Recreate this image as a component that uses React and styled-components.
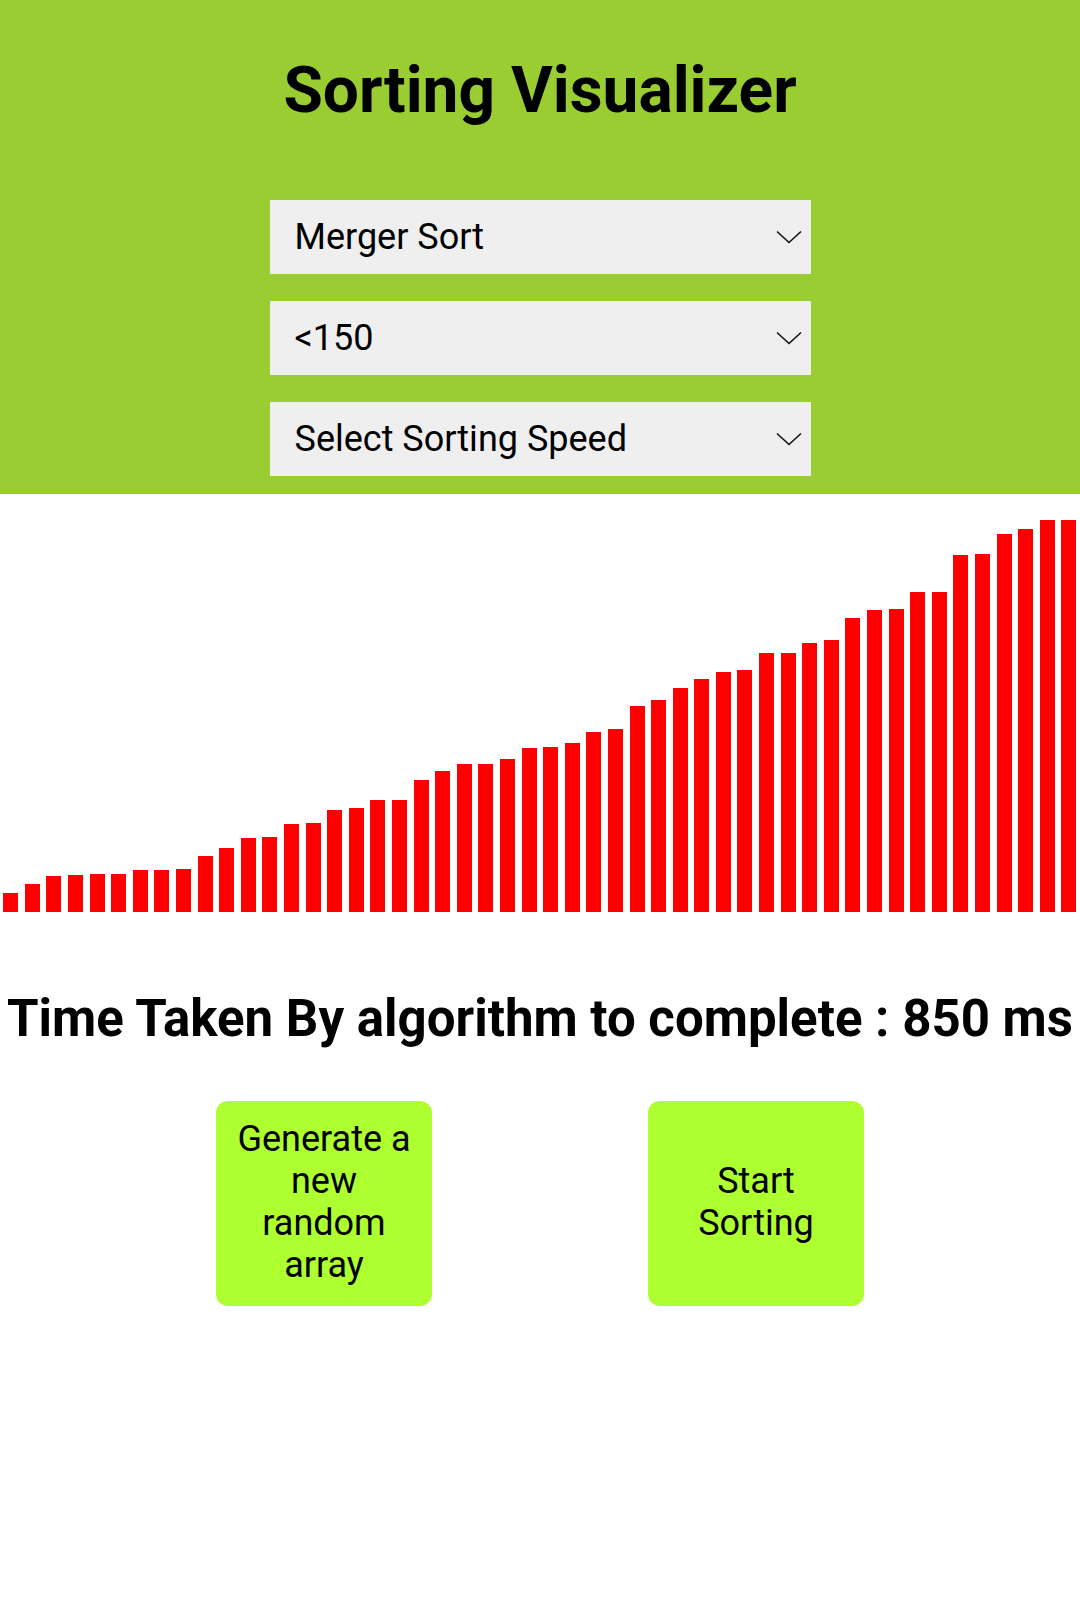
import React from "react";
import styled, { createGlobalStyle } from "styled-components";

const GlobalStyle = createGlobalStyle`
  html, body { margin: 0; padding: 0; background: #ffffff; }
  body { font-family: Roboto, "Liberation Sans", Arial, sans-serif; color: #000; }
  * { box-sizing: border-box; }
`;

const Page = styled.div`
  display: flex;
  flex-direction: column;
  min-height: 1624px;
`;

const Header = styled.header`
  background: #9acd32;
  display: flex;
  flex-direction: column;
  align-items: center;
  padding: 54px 0 18px;
`;

const Title = styled.h1`
  margin: 0 0 72px;
  font-family: Roboto, "Liberation Sans", sans-serif;
  font-size: 64px;
  font-weight: 700;
  line-height: 74px;
  color: #000;
`;

const Controls = styled.div`
  display: flex;
  flex-direction: column;
  gap: 27px;
  width: 541px;
`;

const SelectWrap = styled.div`
  position: relative;
  height: 74px;
`;

const Select = styled.select`
  appearance: none;
  -webkit-appearance: none;
  width: 100%;
  height: 100%;
  border: 0;
  border-radius: 0;
  background: #efefef;
  padding: 0 50px 0 25px;
  font-family: Roboto, "Liberation Sans", sans-serif;
  font-size: 36px;
  font-weight: 400;
  color: #000;
  outline: none;
`;

const Chevron = styled.svg`
  position: absolute;
  right: 9px;
  top: 50%;
  transform: translateY(-50%);
  pointer-events: none;
`;

const Chart = styled.div`
  display: flex;
  align-items: flex-end;
  height: 418px;
`;

const Bar = styled.div`
  flex: 1;
  margin: 0 3.3px;
  background: #ff0000;
`;

const TimeText = styled.h2`
  margin: 77px 0 0;
  text-align: center;
  font-family: Roboto, "Liberation Sans", sans-serif;
  font-size: 51px;
  font-weight: 700;
  line-height: 60px;
  white-space: nowrap;
`;

const Actions = styled.div`
  display: flex;
  justify-content: center;
  gap: 216px;
  margin-top: 52px;
`;

const ActionButton = styled.button`
  width: 216px;
  height: 205px;
  background: #adff2f;
  border: 0;
  border-radius: 12px;
  padding: 0 12px 4px;
  font-family: Roboto, "Liberation Sans", sans-serif;
  font-size: 36px;
  font-weight: 400;
  color: #000;
  cursor: pointer;
`;

const heights = [
  19, 28, 36, 37, 38, 38, 42, 42, 43, 56, 64, 74, 75, 88, 89, 102, 104, 112,
  112, 132, 141, 148, 148, 153, 164, 165, 169, 180, 183, 206, 212, 224, 233,
  240, 242, 259, 259, 269, 272, 294, 302, 303, 320, 320, 357, 358, 378, 383,
  392, 392,
];

function Dropdown({ value, options }) {
  return (
    <SelectWrap>
      <Select defaultValue={value}>
        {options.map((o) => (
          <option key={o} value={o}>
            {o}
          </option>
        ))}
      </Select>
      <Chevron width="26" height="14" viewBox="0 0 26 14" fill="none">
        <path d="M1 1.5 L13 12.5 L25 1.5" stroke="#111" strokeWidth="1.6" />
      </Chevron>
    </SelectWrap>
  );
}

export default function App() {
  return (
    <Page>
      <GlobalStyle />
      <Header>
        <Title>Sorting Visualizer</Title>
        <Controls>
          <Dropdown
            value="Merger Sort"
            options={["Merger Sort", "Bubble Sort", "Quick Sort", "Insertion Sort", "Selection Sort"]}
          />
          <Dropdown value="<150" options={["<50", "<100", "<150", "<200"]} />
          <Dropdown
            value="Select Sorting Speed"
            options={["Select Sorting Speed", "Slow", "Medium", "Fast"]}
          />
        </Controls>
      </Header>
      <Chart>
        {heights.map((h, i) => (
          <Bar key={i} style={{ height: `${h}px` }} />
        ))}
      </Chart>
      <TimeText>Time Taken By algorithm to complete : 850 ms</TimeText>
      <Actions>
        <ActionButton>Generate a new random array</ActionButton>
        <ActionButton>Start Sorting</ActionButton>
      </Actions>
    </Page>
  );
}
